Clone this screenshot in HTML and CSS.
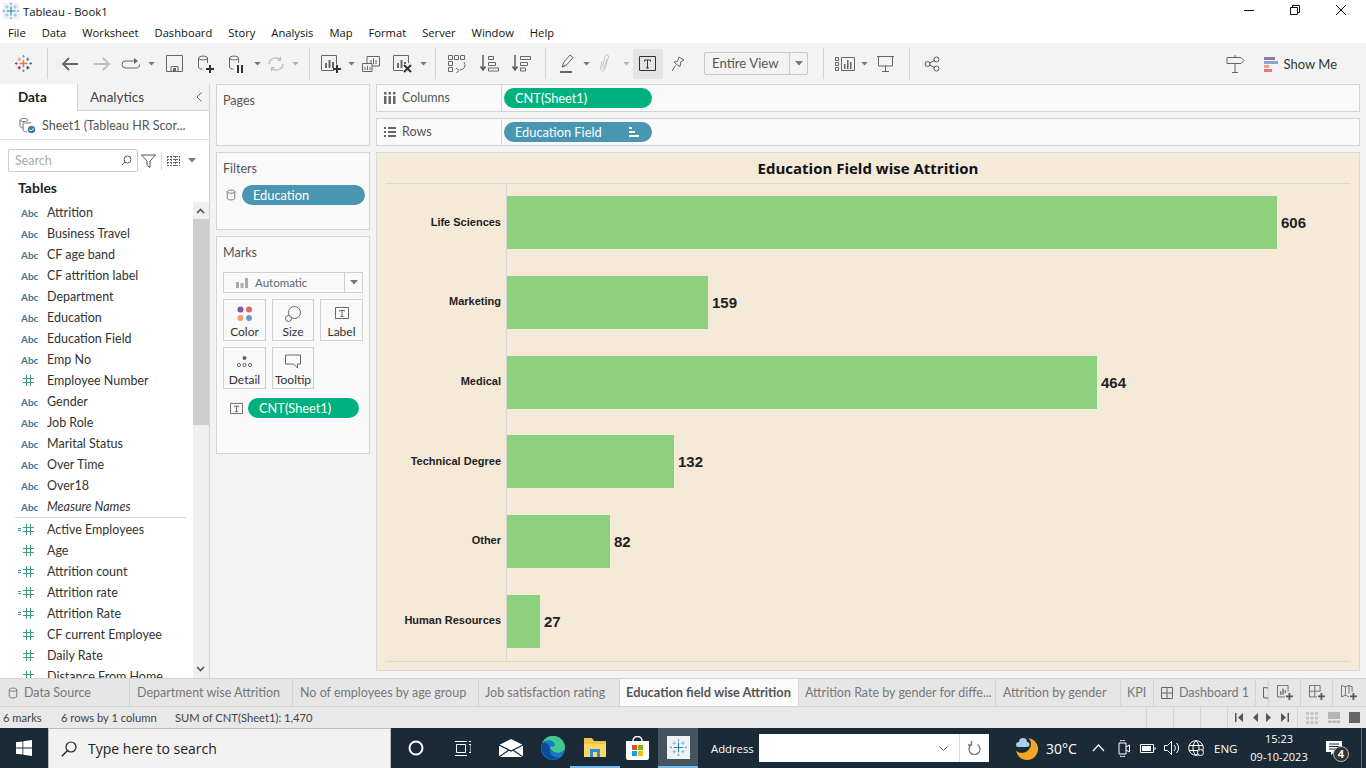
FILE: index.html
```html
<!DOCTYPE html>
<html lang="en">
<head>
  <meta charset="UTF-8">
  <title>Tableau - Book1</title>
  <link rel="stylesheet" href="styles.css">
</head>
<body>
<svg class="defs" width="0" height="0">
  <symbol id="hash" viewBox="0 0 11 11"><path d="M3.500 0v11M7.500 0v11M0 3.500h11M0 7.500h11" fill="none" stroke="#3f9a82"/></symbol>
  <symbol id="calchash" viewBox="0 0 16 11"><path d="M0 4.500h3M0 6.500h3M8.500 0v11M12.500 0v11M5 3.500h11M5 7.500h11" fill="none" stroke="#3f9a82"/></symbol>
  <symbol id="cyl" viewBox="0 0 12 14"><path d="M1.500 3v8c0 2.500 9 2.500 9 0V3c0-2.500-9-2.500-9 0zM1.500 3c0 2.500 9 2.500 9 0" fill="none" stroke="#666"/></symbol>
  <symbol id="tbox" viewBox="0 0 14 14"><path d="M.5 1.500h13v11H.5z" fill="none" stroke="#666"/><path d="M4.500 5.500v-1h5v1M7 4.500v6M5.500 10.500h3" fill="none" stroke="#666"/></symbol>
  <symbol id="caret" viewBox="0 0 8 5"><path d="M0 0h8L4 4.500z" fill="#777"/></symbol>
  <symbol id="plus" viewBox="0 0 8 8"><path d="M4 0v8M0 4h8" stroke="#333" stroke-width="2"/></symbol>
  <symbol id="logo" viewBox="0 0 20 20">
    <path d="M10 5.500v9M5.500 10h9" stroke="#e8762b" stroke-width="1.600"/>
    <path d="M5 3v4M3 5h4" stroke="#e8a02b" stroke-width="1.400"/>
    <path d="M15 3v4M13 5h4" stroke="#5b879b" stroke-width="1.400"/>
    <path d="M5 13v4M3 15h4" stroke="#c72035" stroke-width="1.400"/>
    <path d="M15 13v4M13 15h4" stroke="#1f447e" stroke-width="1.400"/>
    <path d="M10 0v3M8.500 1.500h3" stroke="#7099a6" stroke-width="1.100"/>
    <path d="M10 17v3M8.500 18.500h3" stroke="#59879b" stroke-width="1.100"/>
    <path d="M0 10h3M1.500 8.500v3" stroke="#7c2d6e" stroke-width="1.100"/>
    <path d="M17 10h3M18.500 8.500v3" stroke="#1f6e8c" stroke-width="1.100"/>
  </symbol>
  <symbol id="snow" viewBox="0 0 20 20">
    <path d="M10 5v10M5 10h10" stroke="#2f7fb5" stroke-width="1.200"/>
    <path d="M5.500 3.500v4M3.500 5.500h4M14.500 3.500v4M12.500 5.500h4M5.500 12.500v4M3.500 14.500h4M14.500 12.500v4M12.500 14.500h4" stroke="#8fb9d4"/>
    <path d="M10 1v2.500M8.800 2.200h2.400M10 16.500V19M8.800 17.800h2.400M1 10h2.500M2.200 8.800v2.400M16.500 10H19M17.800 8.800v2.400" stroke="#6da3c6" stroke-width=".8"/>
  </symbol>
</svg>

<div class="app">
  <div class="titlebar">
    <svg class="title-logo" width="18" height="18" viewBox="0 0 20 20"><rect x=".5" y=".5" width="19" height="19" fill="#eef3f6"/><use href="#snow" width="20" height="20"/></svg>
    <span class="title-text">Tableau - Book1</span>
    <div class="win-btns">
      <svg width="46" height="22" viewBox="0 0 46 22"><path d="M18 10.500h10" stroke="#111"/></svg>
      <svg width="46" height="22" viewBox="0 0 46 22"><path d="M18.500 7.500h7v7h-7zM20.500 7.500v-2h7v7h-2" fill="none" stroke="#111"/></svg>
      <svg width="46" height="22" viewBox="0 0 46 22"><path d="M18 5l10 10M28 5L18 15" stroke="#111"/></svg>
    </div>
  </div>

  <nav class="menubar">
    <a>File</a><a>Data</a><a>Worksheet</a><a>Dashboard</a><a>Story</a><a>Analysis</a><a>Map</a><a>Format</a><a>Server</a><a>Window</a><a>Help</a>
  </nav>

  <div class="toolbar">
    <div class="tool w46"><svg width="17" height="17"><use href="#logo"/></svg></div>
    <i class="sep first"></i>
    <div class="tool w32"><svg width="18" height="16" viewBox="0 0 18 16"><path d="M17 8H2M8 2L2 8l6 6" fill="none" stroke="#666" stroke-width="1.800"/></svg></div>
    <div class="tool w32"><svg width="18" height="16" viewBox="0 0 18 16"><path d="M1 8h15M10 2l6 6-6 6" fill="none" stroke="#bdbdbd" stroke-width="1.800"/></svg></div>
    <div class="tool w26"><svg width="20" height="12" viewBox="0 0 20 12"><path d="M13 3H4.500a3 3 0 0 0 0 7h11a3 3 0 0 0 3-3.500" fill="none" stroke="#666"/><path d="M13 0l4 3-4 3z" fill="#666"/></svg></div>
    <div class="tool w14"><svg width="7" height="4"><use href="#caret"/></svg></div>
    <div class="tool w32"><svg width="17" height="17" viewBox="0 0 17 17"><path d="M.5.500h16v16H.5zM5 16.500v-5h7v5" fill="none" stroke="#666"/><path d="M7 13h3v3H7z" fill="#666"/></svg></div>
    <div class="tool w31"><svg width="17" height="18" viewBox="0 0 17 18"><path d="M1.500 3v9c0 1.500 2 2 4 2.200M10.500 8V3c0-2.500-9-2.500-9 0 0 2.500 9 2.500 9 0" fill="none" stroke="#666"/><use href="#plus" x="9" y="10" width="8" height="8"/></svg></div>
    <div class="tool w30"><svg width="17" height="18" viewBox="0 0 17 18"><path d="M1.500 3v9c0 1.500 2 2 4 2.200M10.500 8V3c0-2.500-9-2.500-9 0 0 2.500 9 2.500 9 0" fill="none" stroke="#666"/><path d="M9 10h2v8H9zM13 10h2v8h-2z" fill="#333"/></svg></div>
    <div class="tool w12"><svg width="7" height="4"><use href="#caret"/></svg></div>
    <div class="tool w26"><svg width="18" height="16" viewBox="0 0 18 16"><path d="M2 8a7 6.500 0 0 1 12-4M16 8a7 6.500 0 0 1-12 4" fill="none" stroke="#c4c4c4" stroke-width="1.500"/><path d="M14 0v5H10zM4 16v-5h4z" fill="#c4c4c4"/></svg></div>
    <div class="tool w12"><svg width="7" height="4"><use href="#caret" opacity=".5"/></svg></div>
    <i class="sep s8"></i>
    <div class="tool w30"><svg width="21" height="18" viewBox="0 0 21 18"><path d="M13 15.500H.5V.5h15v9" fill="none" stroke="#666"/><path d="M4 8h2v5H4zM7.500 5h2v8h-2zM11 7h2v6h-2z" fill="#666"/><use href="#plus" x="12" y="10" width="8" height="8"/></svg></div>
    <div class="tool w10"><svg width="7" height="4"><use href="#caret"/></svg></div>
    <div class="tool w30"><svg width="18" height="16" viewBox="0 0 18 16"><path d="M5 8V.5h12.500V10H10" fill="none" stroke="#666"/><path d="M.5 7.500H10v8H.5z" fill="none" stroke="#666"/><path d="M9 4v4M11.500 2.500V8M14 4v4M3 11v3M5.500 10v4M8 11v3" stroke="#666"/></svg></div>
    <div class="tool w32"><svg width="19" height="18" viewBox="0 0 19 18"><path d="M10 15.500H.5V.5h15V8" fill="none" stroke="#666"/><path d="M4 8h2v5H4zM7.500 5h2v8h-2zM11 7h2v2h-2z" fill="#666"/><path d="M11 10l7 7M18 10l-7 7" stroke="#333" stroke-width="2"/></svg></div>
    <div class="tool w10"><svg width="7" height="4"><use href="#caret"/></svg></div>
    <i class="sep s7"></i>
    <div class="tool w30"><svg width="19" height="19" viewBox="0 0 19 19"><path d="M.5 1.500h4v4h-4zM6.500 1.500h4v4h-4zM12.500 1.500h4v4h-4zM.5 7.500h4v4h-4zM.5 13.500h4v4h-4z" fill="none" stroke="#666"/><path d="M16 8a5 5 0 0 1-4 8M8 14l3 2.500L8.500 19" fill="none" stroke="#666"/></svg></div>
    <div class="tool w34"><svg width="19" height="17" viewBox="0 0 19 17"><path d="M3 0v15M.5 11.500L3 15l2.500-3.500" fill="none" stroke="#555" stroke-width="1.400"/><path d="M8.500 1.500h5v3h-5zM8.500 7.500h7v3h-7zM8.500 13h10v3h-10z" fill="none" stroke="#666"/></svg></div>
    <div class="tool w31"><svg width="19" height="17" viewBox="0 0 19 17"><path d="M3 0v15M.5 11.500L3 15l2.500-3.500" fill="none" stroke="#555" stroke-width="1.400"/><path d="M8.500 1.500h10v3h-10zM8.500 7.500h7v3h-7zM8.500 13h5v3h-5z" fill="none" stroke="#666"/></svg></div>
    <i class="sep s8"></i>
    <div class="tool w30"><svg width="14" height="19" viewBox="0 0 14 19"><path d="M2 13l2-5 6-7 3 2.500-6 7zM2 13l3-1" fill="none" stroke="#666"/><path d="M0 17h12v2H0z" fill="#666"/></svg></div>
    <div class="tool w8"><svg width="7" height="4"><use href="#caret"/></svg></div>
    <div class="tool w30"><svg width="12" height="19" viewBox="0 0 12 19"><path d="M3 7l-1.500 7c-.5 3 3.500 4 4.300 1L9.500 3C10 .5 7 0 6 2.500L3.500 13c-.3 1.500 1.700 2 2 .5L8 5" fill="none" stroke="#c6c6c6"/></svg></div>
    <div class="tool w12"><svg width="7" height="4"><use href="#caret" opacity=".5"/></svg></div>
    <div class="tool w30 active"><svg width="18" height="16" viewBox="0 0 18 16"><path d="M.5.500h16v14H.5z" fill="none" stroke="#333"/><path d="M5.500 5.500V4h6v1.500M8.500 4v8M7 12h3" fill="none" stroke="#333"/></svg></div>
    <div class="tool w30"><svg width="14" height="16" viewBox="0 0 14 16"><path d="M8 1l5 3-3 1.500-1 5L5 8 3 6l3.500-.5zM4.500 9.500L1 15" fill="none" stroke="#666"/></svg></div>
    <div class="fit-select"><span>Entire View</span><b><svg width="8" height="5"><use href="#caret"/></svg></b></div>
    <i class="sep s15"></i>
    <div class="tool w30"><svg width="20" height="14" viewBox="0 0 20 14"><path d="M.5.500h3v3h-3zM.5 5.500h3v3h-3zM.5 10.500h3v3h-3zM6.500.5h13v13h-13z" fill="none" stroke="#666"/><path d="M9 7h1.500v5H9zM12 3h1.500v9H12zM15 5h1.500v7H15z" fill="#666"/></svg></div>
    <div class="tool w8"><svg width="7" height="4"><use href="#caret"/></svg></div>
    <div class="tool w34"><svg width="17" height="16" viewBox="0 0 17 16"><path d="M0 .5h17M1.500 1v9h14V1M8.500 10v5M5 15.500h7" fill="none" stroke="#666"/></svg></div>
    <i class="sep s7"></i>
    <div class="tool w32"><svg width="16" height="16" viewBox="0 0 16 16"><circle cx="3.500" cy="8" r="2.500" fill="none" stroke="#555"/><circle cx="12.500" cy="3.500" r="2.500" fill="none" stroke="#555"/><circle cx="12.500" cy="12.500" r="2.500" fill="none" stroke="#555"/><path d="M5.800 7l4.500-2.500M5.800 9l4.500 2.500" stroke="#555"/></svg></div>
    <div class="tool-right">
      <svg class="signpost" width="19" height="18" viewBox="0 0 19 18"><path d="M9 0v2M1 2.500h14l3 3-3 3H1zM9 9v8M6 17.500h6" fill="none" stroke="#666"/></svg>
      <svg width="15" height="16" viewBox="0 0 15 16"><path d="M1 1h11v3H1z" fill="#8e7aa3"/><path d="M1 5h14v3H1z" fill="#86a7cf"/><path d="M1 9h5v3H1z" fill="#f3a57a"/><path d="M1 13h8v3H1z" fill="#f5727f"/></svg>
      <span>Show Me</span>
    </div>
  </div>

  <div class="workspace">
    <aside class="data-pane">
      <div class="pane-tabs">
        <div class="pane-tab current">Data</div>
        <div class="pane-tab">Analytics</div>
        <svg class="collapse" width="6" height="10" viewBox="0 0 6 10"><path d="M5.500.5L1 5l4.500 4.500" fill="none" stroke="#666"/></svg>
      </div>
      <div class="source-row">
        <svg width="17" height="17" viewBox="0 0 17 17"><path d="M1 3v6c0 1.500 2 2 4 2M9 3c0 2-8 2-8 0s8-2 8 0zM4 6v7c0 1.200 2 2 4 2M12 5c0 1.500-8 1.500-8 0" fill="none" stroke="#777"/><circle cx="12.500" cy="12.500" r="3.800" fill="#3f88a8"/><path d="M10.500 12.500l1.500 1.500 2.500-2.500" fill="none" stroke="#fff"/></svg>
        <span>Sheet1 (Tableau HR Scor...</span>
      </div>
      <div class="search-row">
        <div class="search-box"><span>Search</span><svg width="11" height="11" viewBox="0 0 11 11"><circle cx="6.500" cy="4.500" r="3.500" fill="none" stroke="#555"/><path d="M4 7L1 10" stroke="#555"/></svg></div>
        <svg width="15" height="14" viewBox="0 0 15 14"><path d="M.5 1h14L9 7v6.500l-3-2V7z" fill="none" stroke="#555"/></svg>
        <i class="mini-sep"></i>
        <svg width="13" height="10" viewBox="0 0 13 10"><path d="M0 .5h13M0 3.500h13M0 6.500h13M0 9.500h13M.5 0v10M4.500 0v10M8.500 0v10M12.500 0v10" fill="none" stroke="#666" stroke-dasharray="2 1"/></svg>
        <svg class="view-caret" width="8" height="5"><use href="#caret"/></svg>
      </div>
      <div class="tables-title">Tables</div>
      <div class="fields-wrap">
        <ul class="fields">
          <li><b class="abc">Abc</b>Attrition</li>
          <li><b class="abc">Abc</b>Business Travel</li>
          <li><b class="abc">Abc</b>CF age band</li>
          <li><b class="abc">Abc</b>CF attrition label</li>
          <li><b class="abc">Abc</b>Department</li>
          <li><b class="abc">Abc</b>Education</li>
          <li><b class="abc">Abc</b>Education Field</li>
          <li><b class="abc">Abc</b>Emp No</li>
          <li><span class="num"><svg width="11" height="11"><use href="#hash"/></svg></span>Employee Number</li>
          <li><b class="abc">Abc</b>Gender</li>
          <li><b class="abc">Abc</b>Job Role</li>
          <li><b class="abc">Abc</b>Marital Status</li>
          <li><b class="abc">Abc</b>Over Time</li>
          <li><b class="abc">Abc</b>Over18</li>
          <li class="measure-names"><b class="abc">Abc</b><em>Measure Names</em></li>
          <li><span class="num"><svg width="16" height="11"><use href="#calchash"/></svg></span>Active Employees</li>
          <li><span class="num"><svg width="11" height="11"><use href="#hash"/></svg></span>Age</li>
          <li><span class="num"><svg width="16" height="11"><use href="#calchash"/></svg></span>Attrition count</li>
          <li><span class="num"><svg width="16" height="11"><use href="#calchash"/></svg></span>Attrition rate</li>
          <li><span class="num"><svg width="16" height="11"><use href="#calchash"/></svg></span>Attrition Rate</li>
          <li><span class="num"><svg width="11" height="11"><use href="#hash"/></svg></span>CF current Employee</li>
          <li><span class="num"><svg width="11" height="11"><use href="#hash"/></svg></span>Daily Rate</li>
          <li><span class="num"><svg width="11" height="11"><use href="#hash"/></svg></span>Distance From Home</li>
        </ul>
        <div class="scrollbar">
          <svg class="arrow" width="15" height="17" viewBox="0 0 15 17"><path d="M4 11l3.500-3.500L11 11" fill="none" stroke="#555" stroke-width="1.600"/></svg>
          <div class="thumb"></div>
          <div class="track"></div>
          <svg class="arrow" width="15" height="17" viewBox="0 0 15 17"><path d="M4 6l3.500 3.500L11 6" fill="none" stroke="#555" stroke-width="1.600"/></svg>
        </div>
      </div>
    </aside>

    <div class="cards">
      <section class="card pages"><h3>Pages</h3></section>
      <section class="card filters">
        <h3>Filters</h3>
        <div class="filter-row">
          <svg width="10" height="12"><use href="#cyl"/></svg>
          <div class="pill blue wide">Education</div>
        </div>
      </section>
      <section class="card marks">
        <h3>Marks</h3>
        <div class="mark-type">
          <span class="mark-type-label"><svg width="12" height="10" viewBox="0 0 12 10"><path d="M0 4h3v6H0zM4.500 5h3v5h-3zM9 0h3v10H9z" fill="#aaa"/></svg>Automatic</span>
          <b><svg width="8" height="5"><use href="#caret"/></svg></b>
        </div>
        <div class="mark-grid">
          <div class="mark-btn"><svg width="16" height="16" viewBox="0 0 16 16"><circle cx="3.500" cy="3.500" r="3" fill="#7d5a91"/><circle cx="12" cy="3.500" r="3" fill="#ef5d6f"/><circle cx="3.500" cy="12" r="3" fill="#f2a070"/><circle cx="12" cy="12" r="3" fill="#6d9ccc"/></svg>Color</div>
          <div class="mark-btn"><svg width="16" height="16" viewBox="0 0 16 16"><circle cx="9.500" cy="6.500" r="6" fill="none" stroke="#666"/><circle cx="3.500" cy="12.500" r="3" fill="#fafafa" stroke="#666"/></svg>Size</div>
          <div class="mark-btn"><svg width="14" height="14"><use href="#tbox"/></svg>Label</div>
          <div class="mark-btn"><svg width="15" height="15" viewBox="0 0 15 15"><circle cx="7.500" cy="4" r="2" fill="#666"/><circle cx="2" cy="11" r="1.600" fill="none" stroke="#666"/><circle cx="7.500" cy="11" r="1.600" fill="none" stroke="#666"/><circle cx="13" cy="11" r="1.600" fill="none" stroke="#666"/></svg>Detail</div>
          <div class="mark-btn"><svg width="16" height="15" viewBox="0 0 16 15"><path d="M.5 1h15v9h-3v4l-4-4h-8z" fill="none" stroke="#666"/></svg>Tooltip</div>
        </div>
        <div class="mark-pill-row">
          <svg width="13" height="13"><use href="#tbox"/></svg>
          <div class="pill green wide">CNT(Sheet1)</div>
        </div>
      </section>
    </div>

    <div class="view">
      <div class="shelf">
        <div class="shelf-name"><svg width="12" height="12" viewBox="0 0 12 12"><path d="M0 0h2.500v2.500H0zM4.500 0H7v2.500H4.500zM9 0h2.500v2.500H9zM0 4h2.500v8H0zM4.500 4H7v8H4.500zM9 4h2.500v8H9z" fill="#666"/></svg>Columns</div>
        <div class="shelf-pills"><div class="pill green">CNT(Sheet1)</div></div>
      </div>
      <div class="shelf">
        <div class="shelf-name"><svg width="12" height="10" viewBox="0 0 12 10"><path d="M0 0h2v2H0zM4 0h8v2H4zM0 4h2v2H0zM4 4h8v2H4zM0 8h2v2H0zM4 8h8v2H4z" fill="#666"/></svg>Rows</div>
        <div class="shelf-pills"><div class="pill blue">Education Field<svg class="sort-mark" width="10" height="10" viewBox="0 0 10 10"><path d="M0 0h3v2H0zM0 4h6v2H0zM0 8h10v2H0z" fill="#fff"/></svg></div></div>
      </div>
      <div class="chart">
        <h2 class="chart-title">Education Field wise Attrition</h2>
        <div class="plot">
          <div class="bar-row"><div class="bar-label">Life Sciences</div><div class="bar-cell"><div class="bar" style="width:770px"></div><span class="bar-value">606</span></div></div>
          <div class="bar-row"><div class="bar-label">Marketing</div><div class="bar-cell"><div class="bar" style="width:201px"></div><span class="bar-value">159</span></div></div>
          <div class="bar-row"><div class="bar-label">Medical</div><div class="bar-cell"><div class="bar" style="width:590px"></div><span class="bar-value">464</span></div></div>
          <div class="bar-row"><div class="bar-label">Technical Degree</div><div class="bar-cell"><div class="bar" style="width:167px"></div><span class="bar-value">132</span></div></div>
          <div class="bar-row"><div class="bar-label">Other</div><div class="bar-cell"><div class="bar" style="width:103px"></div><span class="bar-value">82</span></div></div>
          <div class="bar-row"><div class="bar-label">Human Resources</div><div class="bar-cell"><div class="bar" style="width:33px"></div><span class="bar-value">27</span></div></div>
        </div>
      </div>
    </div>
  </div>

  <div class="sheet-tabs">
    <div class="sheet-tab t130"><svg width="10" height="12"><use href="#cyl"/></svg>Data Source</div>
    <div class="sheet-tab t163">Department wise Attrition</div>
    <div class="sheet-tab t186">No of employees by age group</div>
    <div class="sheet-tab t141">Job satisfaction rating</div>
    <div class="sheet-tab t179 current">Education field wise Attrition</div>
    <div class="sheet-tab t197">Attrition Rate by gender for diffe...</div>
    <div class="sheet-tab t125">Attrition by gender</div>
    <div class="sheet-tab t33">KPI</div>
    <div class="sheet-tab t102"><svg width="12" height="12" viewBox="0 0 12 12"><path d="M.5.500h11v11H.5zM6 .5v11M.5 6h11" fill="none" stroke="#666"/></svg>Dashboard 1</div>
    <div class="sheet-tab t13"><svg width="6" height="12" viewBox="0 0 6 12"><path d="M6 1L.5.500v10L6 11.500" fill="none" stroke="#666"/></svg></div>
    <div class="new-tab"><svg width="16" height="15" viewBox="0 0 18 17"><path d="M9 13.500H.5V.5h12v7" fill="none" stroke="#666"/><path d="M3.500 7h1.500v4H3.500zM6 4h1.500v7H6zM8.500 6H10v3H8.500z" fill="#666"/><use href="#plus" x="10" y="9" width="8" height="8" opacity=".8"/></svg></div>
    <div class="new-tab"><svg width="16" height="15" viewBox="0 0 18 17"><path d="M9 13.500H.5V.5h12v7M6.500 .5v13M.5 7h12" fill="none" stroke="#666"/><use href="#plus" x="10" y="9" width="8" height="8" opacity=".8"/></svg></div>
    <div class="new-tab"><svg width="16" height="15" viewBox="0 0 18 17"><path d="M9 13.500l-4-2-4.500 2V.5L5 2l4-1.500L12.500 2v6M5 2v9.500M9 .5V10" fill="none" stroke="#666"/><use href="#plus" x="10" y="9" width="8" height="8" opacity=".8"/></svg></div>
  </div>

  <div class="statusbar">
    <span class="st-marks">6 marks</span>
    <span class="st-rows">6 rows by 1 column</span>
    <span class="st-sum">SUM of CNT(Sheet1): 1,470</span>
    <div class="st-right">
      <i class="st-cell"></i><i class="st-cell"></i><i class="st-cell"></i>
      <div class="st-nav">
        <svg width="8" height="9" viewBox="0 0 8 9"><path d="M0 0h1.500v9H0zM8 0v9L3 4.500z" fill="#555"/></svg>
        <svg width="6" height="9" viewBox="0 0 6 9"><path d="M6 0v9L1 4.500z" fill="#555"/></svg>
        <svg width="6" height="9" viewBox="0 0 6 9"><path d="M0 0v9l5-4.500z" fill="#555"/></svg>
        <svg width="8" height="9" viewBox="0 0 8 9"><path d="M0 0v9l5-4.500zM6.500 0H8v9H6.500z" fill="#555"/></svg>
      </div>
      <div class="st-views">
        <svg width="12" height="12" viewBox="0 0 12 12"><path d="M0 0h3v3H0zM4.500 0h3v3h-3zM9 0h3v3H9zM0 4.500h3v3H0zM4.500 4.500h3v3h-3zM9 4.500h3v3H9zM0 9h3v3H0zM4.500 9h3v3h-3zM9 9h3v3H9z" fill="#c4c4c4"/></svg>
        <svg width="12" height="11" viewBox="0 0 12 11"><path d="M0 0h12v7H0zM0 8.500h3.500V11H0zM4.300 8.500h3.500V11H4.300zM8.500 8.500H12V11H8.500z" fill="#b5b5b5"/></svg>
        <svg width="11" height="11"><rect width="11" height="11" fill="#666"/></svg>
      </div>
    </div>
  </div>

  <footer class="taskbar">
    <div class="start"><svg width="16" height="16" viewBox="0 0 16 16"><path d="M0 2.300l6.500-.9v6.200H0zM7.300 1.300L16 0v7.600H7.300zM0 8.400h6.500v6.200L0 13.700zM7.300 8.400H16V16l-8.700-1.200z" fill="#fff"/></svg></div>
    <div class="task-search"><svg width="16" height="16" viewBox="0 0 16 16"><circle cx="10" cy="6" r="5" fill="none" stroke="#222" stroke-width="1.200"/><path d="M6.300 9.700L.8 15.200" stroke="#222" stroke-width="1.400"/></svg><span>Type here to search</span></div>
    <div class="task-icon w50"><svg width="16" height="16" viewBox="0 0 16 16"><circle cx="8" cy="8" r="6.500" fill="none" stroke="#fff" stroke-width="2"/></svg></div>
    <div class="task-icon w44"><svg width="16" height="15" viewBox="0 0 16 15"><path d="M0 .5h12M0 14.500h12M1.500 3.500h9v8h-9zM14 .5h2M14 3.500h2v8h-2" fill="none" stroke="#fff"/></svg></div>
    <div class="task-icon w50 mail"><svg width="24" height="18" viewBox="0 0 24 18"><path d="M0 6l12-6 12 6v12H0z" fill="#fff"/><path d="M0 6l12 6 12-6M0 18l10-7M24 18l-10-7" fill="none" stroke="#1a2b37" stroke-width="1.200"/></svg></div>
    <div class="task-icon w34"><svg width="24" height="24" viewBox="0 0 24 24"><circle cx="12" cy="12" r="12" fill="#1b76c4"/><path d="M24 12a12 12 0 0 0-23-5c4-4 12-4 13 2-1 2-4 2-5 1 0 5 7 8 11 6 2-1 4-2 4-4z" fill="#3ec98f"/><path d="M1 7c-2 6 1 13 8 16 3 1 7 0 9-2-6 1-10-3-9-8 0-5-5-7-8-6z" fill="#0c4c96"/></svg></div>
    <div class="task-icon w50 running"><svg width="22" height="19" viewBox="0 0 22 19"><path d="M0 0h8l2 3h12v16H0z" fill="#f5c444"/><path d="M0 6h22v13H0z" fill="#fbd868"/><path d="M6 11h10v8h-3v-5H9v5H6z" fill="#2a8fd4"/></svg></div>
    <div class="task-icon w34"><svg width="23" height="24" viewBox="0 0 23 24"><path d="M0 5h23v17a2 2 0 0 1-2 2H2a2 2 0 0 1-2-2z" fill="#fff"/><path d="M7 5c0-6 9-6 9 0" fill="none" stroke="#fff" stroke-width="1.500"/><path d="M6 9h5v5H6z" fill="#f25022"/><path d="M12 9h5v5h-5z" fill="#7fba00"/><path d="M6 15h5v5H6z" fill="#00a4ef"/><path d="M12 15h5v5h-5z" fill="#ffb900"/></svg></div>
    <div class="task-icon tableau-app"><svg width="23" height="23" viewBox="0 0 23 23"><rect width="23" height="23" fill="#eef3f6"/><svg x="2" y="2" width="19" height="19" viewBox="0 0 20 20"><use href="#snow" width="20" height="20"/></svg></svg></div>
    <span class="addr-label">Address</span>
    <div class="addr-box"><svg width="9" height="5" viewBox="0 0 9 5"><path d="M.5.500l4 4 4-4" fill="none" stroke="#555"/></svg><b><svg width="13" height="14" viewBox="0 0 13 14"><path d="M9.500 3.500a5.500 5.500 0 1 1-6 0M3.500 0v4H0" fill="none" stroke="#777" stroke-width="1.300"/></svg></b></div>
    <div class="weather"><svg width="24" height="24" viewBox="0 0 24 24"><circle cx="13" cy="13" r="11" fill="#f6a623"/><circle cx="8" cy="8" r="9" fill="#1a2b37"/><path d="M2 9a3 3 0 0 1 3-3 4 4 0 0 1 8 0 2.500 2.500 0 0 1 0 5H4a2 2 0 0 1-2-2z" fill="#a9cdea"/></svg><span>30°C</span></div>
    <div class="tray">
      <svg class="tray-chevron" width="13" height="8" viewBox="0 0 13 8"><path d="M1 7l5.500-6L12 7" fill="none" stroke="#fff" stroke-width="1.200"/></svg>
      <svg class="tray-meet" width="12" height="17" viewBox="0 0 12 17"><path d="M1 3h7v11H1zM8 7l3.500-2v7L8 10M2 1c1-1 4-1 5 0M2 16c1 1 4 1 5 0" fill="none" stroke="#fff"/></svg>
      <svg width="16" height="9" viewBox="0 0 16 9"><path d="M.5.500h13v8H.5zM15 3v3" fill="none" stroke="#fff"/><path d="M2 2h9v5H2z" fill="#fff"/></svg>
      <svg width="16" height="14" viewBox="0 0 16 14"><path d="M.5 4.500h3l4-4v13l-4-4h-3zM10 4a4 4 0 0 1 0 6M12.500 2a7 7 0 0 1 0 10" fill="none" stroke="#fff"/></svg>
      <svg width="16" height="16" viewBox="0 0 16 16"><circle cx="8" cy="8" r="7.300" fill="none" stroke="#fff"/><path d="M8 .5c-4 4-4 11 0 15M8 .5c4 4 4 11 0 15M1 5.500h14M1 10.500h14" fill="none" stroke="#fff"/><circle cx="12.500" cy="12.500" r="3" fill="#1a2b37" stroke="#fff"/></svg>
    </div>
    <span class="lang">ENG</span>
    <div class="clock"><span>15:23</span><span>09-10-2023</span></div>
    <div class="notify"><svg width="16" height="14" viewBox="0 0 16 14"><path d="M0 0h16v11H8l-3 3v-3H0z" fill="#fff"/><path d="M3 3h10M3 5.500h10M3 8h7" stroke="#1a2b37"/></svg><span class="notify-count">4</span></div>
    <i class="show-desktop"></i>
  </footer>
</div>
</body>
</html>
```

FILE: styles.css
```css
* {
  box-sizing: border-box;
}

html, body {
  margin: 0;
  padding: 0;
  overflow: hidden;
}

body {
  font-family: "Lato", "Open Sans", sans-serif;
  font-size: 12.500px;
  color: #333;
  background: #f3f3f3;
}

.defs {
  position: absolute;
}

svg {
  display: block;
  flex: none;
}

.app {
  width: 1366px;
  height: 768px;
  display: flex;
  flex-direction: column;
}

/* window chrome */
.titlebar {
  height: 22px;
  background: #fff;
  display: flex;
  align-items: center;
  padding-left: 2px;
}

.title-text {
  margin-left: 3px;
  font-family: "Open Sans", sans-serif;
  font-size: 11.300px;
  color: #111;
}

.win-btns {
  margin-left: auto;
  margin-right: 2px;
  display: flex;
}

.menubar {
  height: 21px;
  background: #fff;
  display: flex;
  align-items: center;
  padding-left: 8px;
  gap: 16px;
  font-family: "Open Sans", sans-serif;
  font-size: 11.200px;
  color: #111;
}

/* toolbar */
.toolbar {
  height: 41px;
  background: #f3f3f3;
  display: flex;
  align-items: center;
}

.tool {
  height: 30px;
  display: flex;
  align-items: center;
  justify-content: center;
}

.tool.active {
  background: #e4e4e4;
  margin-left: 1px;
}

.w8 { width: 8px; }
.w10 { width: 10px; }
.w12 { width: 12px; }
.w14 { width: 14px; }
.w26 { width: 26px; }
.w30 { width: 30px; }
.w31 { width: 31px; }
.w32 { width: 32px; }
.w34 { width: 34px; }
.w44 { width: 44px; }
.w46 { width: 46px; }
.w50 { width: 50px; }

.sep {
  width: 1px;
  height: 31px;
  background: #d4d4d4;
  margin-right: 6px;
}

.sep.first { margin-left: 1px; }
.sep.s7 { margin-left: 7px; }
.sep.s8 { margin-left: 8px; }
.sep.s15 { margin-left: 15px; }

.fit-select {
  width: 104px;
  height: 23px;
  margin-left: 11px;
  border: 1px solid #c8c8c8;
  border-radius: 2px;
  display: flex;
  align-items: center;
  font-size: 13.200px;
  color: #555;
}

.fit-select span {
  flex: 1;
  padding-left: 7px;
  padding-bottom: 2px;
}

.fit-select b {
  width: 18px;
  height: 100%;
  border-left: 1px solid #c8c8c8;
  display: flex;
  align-items: center;
  justify-content: center;
}

.tool-right {
  margin-left: auto;
  margin-right: 29px;
  display: flex;
  align-items: center;
  font-size: 13px;
  color: #333;
}

.signpost {
  margin-right: 18px;
}

.tool-right span {
  margin-left: 6px;
}

/* main area */
.workspace {
  height: 594px;
  display: flex;
  overflow: hidden;
}

.data-pane {
  width: 210px;
  background: #fff;
  border-right: 1px solid #d4d4d4;
  display: flex;
  flex-direction: column;
  flex: none;
}

.pane-tabs {
  height: 27px;
  display: flex;
  align-items: stretch;
  background: #f3f3f3;
  position: relative;
  flex: none;
}

.pane-tab {
  display: flex;
  align-items: center;
  font-size: 13.500px;
  color: #444;
  padding-left: 12px;
  padding-bottom: 1px;
  flex: 1;
  border-bottom: 1px solid #d4d4d4;
}

.pane-tab.current {
  flex: none;
  width: 78px;
  padding-left: 18px;
  font-weight: 700;
  color: #222;
  border-bottom: 0;
  border-right: 1px solid #d4d4d4;
  background: #fff;
}

.collapse {
  position: absolute;
  right: 7px;
  top: 8px;
}

.source-row {
  height: 29px;
  display: flex;
  align-items: center;
  gap: 6px;
  padding-left: 19px;
  border-bottom: 1px solid #e4e4e4;
  color: #555;
  flex: none;
}

.search-row {
  display: flex;
  align-items: center;
  margin-top: 9px;
  padding-left: 8px;
  flex: none;
}

.search-box {
  width: 130px;
  height: 23px;
  border: 1px solid #ccc;
  border-radius: 2px;
  display: flex;
  align-items: center;
  justify-content: space-between;
  padding: 0 5px 0 6px;
  margin-right: 3px;
  color: #aaa;
}

.mini-sep {
  width: 1px;
  height: 18px;
  background: #d8d8d8;
  margin: 0 5px;
}

.view-caret {
  margin-left: 8px;
}

.tables-title {
  margin: 7px 0 0 18px;
  height: 20px;
  font-size: 14px;
  font-weight: 700;
  color: #222;
  flex: none;
}

.fields-wrap {
  flex: 1;
  min-height: 0;
  margin-top: 3px;
  display: flex;
  overflow: hidden;
}

.fields {
  flex: 1;
  margin: 0;
  padding: 0;
  list-style: none;
}

.fields li {
  height: 21px;
  padding-bottom: 1px;
  display: flex;
  align-items: center;
  color: #333;
}

.fields li.measure-names {
  height: 22px;
  margin-bottom: 1px;
  margin-left: 15px;
  margin-right: 7px;
  border-bottom: 1px solid #d8d8d8;
}

.measure-names .abc {
  margin-left: -15px;
}

.abc {
  width: 47px;
  padding-left: 21px;
  padding-top: 1px;
  font-size: 10px;
  font-weight: 700;
  color: #3f7593;
  flex: none;
}

.num {
  width: 47px;
  padding-right: 13px;
  padding-top: 1px;
  display: flex;
  justify-content: flex-end;
  flex: none;
}

.scrollbar {
  width: 16px;
  margin-right: 0;
  background: #f0f0f0;
  display: flex;
  flex-direction: column;
  flex: none;
}

.arrow {
  flex: none;
}

.thumb {
  height: 206px;
  background: #cdcdcd;
  flex: none;
}

.track {
  flex: 1;
}

/* middle cards */
.cards {
  width: 154px;
  margin-left: 6px;
  display: flex;
  flex-direction: column;
  gap: 6px;
  flex: none;
}

.card {
  background: #f9f9f9;
  border: 1px solid #d4d4d4;
  padding: 8px 6px 0;
}

.card h3 {
  margin: 0;
  font-size: 12.500px;
  font-weight: 400;
  color: #555;
}

.pages {
  height: 62px;
}

.filters {
  height: 78px;
}

.marks {
  height: 218px;
}

.filter-row {
  display: flex;
  align-items: center;
  gap: 6px;
  margin-top: 9px;
  padding-left: 3px;
  padding-right: 0;
  margin-right: -2px;
}

.pill {
  width: 148px;
  height: 20px;
  border-radius: 10px;
  color: #fff;
  font-size: 12.800px;
  display: flex;
  align-items: center;
  padding-left: 11px;
  padding-right: 12px;
  justify-content: space-between;
}

.pill.wide {
  width: auto;
  flex: 1;
}

.pill.green {
  background: #00b180;
}

.pill.blue {
  background: #4996b2;
}

.mark-type {
  margin-top: 12px;
  height: 21px;
  border: 1px solid #d0d0d0;
  display: flex;
  align-items: center;
  font-size: 11.500px;
  color: #666;
}

.mark-type-label {
  flex: 1;
  display: flex;
  align-items: center;
  gap: 7px;
  padding-left: 12px;
}

.mark-type b {
  width: 18px;
  height: 100%;
  border-left: 1px solid #d0d0d0;
  display: flex;
  align-items: center;
  justify-content: center;
}

.mark-grid {
  margin-top: 6px;
  display: grid;
  grid-template-columns: 43px 42px 43px;
  grid-auto-rows: 42px;
  column-gap: 6px;
  row-gap: 6px;
}

.mark-btn {
  border: 1px solid #d0d0d0;
  display: flex;
  flex-direction: column;
  align-items: center;
  justify-content: space-between;
  padding: 6px 0 1px;
  font-size: 12px;
  line-height: 15px;
  color: #333;
}

.mark-pill-row {
  margin-top: 9px;
  padding-left: 7px;
  padding-right: 4px;
  display: flex;
  align-items: center;
  gap: 5px;
}

/* shelves and chart */
.view {
  width: 984px;
  margin-left: 6px;
  display: flex;
  flex-direction: column;
  flex: none;
}

.shelf {
  height: 28px;
  margin-bottom: 6px;
  background: #f9f9f9;
  border: 1px solid #d4d4d4;
  display: flex;
  align-items: center;
}

.shelf-name {
  width: 125px;
  height: 100%;
  padding-left: 7px;
  padding-bottom: 1px;
  border-right: 1px solid #d4d4d4;
  display: flex;
  align-items: center;
  gap: 6px;
  color: #555;
}

.shelf-pills {
  padding-left: 2px;
}

.sort-mark {
  margin-right: 1px;
}

.chart {
  height: 519px;
  background: #f5e9d8;
  border: 1px solid #d8d8d8;
  padding: 0 9px;
}

.chart-title {
  margin: 0;
  height: 30px;
  display: flex;
  align-items: center;
  justify-content: center;
  font-family: "Open Sans", sans-serif;
  font-size: 15px;
  font-weight: 700;
  color: #111;
}

.plot {
  height: 479px;
  padding-bottom: 1px;
  box-shadow: inset 0 1px 0 #d8d8d8, inset 0 -1px 0 #d8d8d8;
  display: grid;
  grid-template-rows: repeat(6, 1fr);
}

.bar-row {
  display: flex;
  align-items: stretch;
}

.bar-label {
  width: 120px;
  padding-right: 5px;
  padding-bottom: 2px;
  display: flex;
  align-items: center;
  justify-content: flex-end;
  font-family: "Liberation Sans", sans-serif;
  font-size: 11px;
  font-weight: 700;
  color: #222;
}

.bar-cell {
  flex: 1;
  border-left: 1px solid #d8d8d8;
  display: flex;
  align-items: center;
}

.bar {
  height: 53px;
  background: #8dd17e;
}

.bar-value {
  margin-left: 4px;
  font-family: "Liberation Sans", sans-serif;
  font-size: 15px;
  font-weight: 700;
  color: #222;
}

/* sheet tabs */
.sheet-tabs {
  height: 29px;
  background: #e6e6e6;
  border-top: 1px solid #d4d4d4;
  border-bottom: 1px solid #d4d4d4;
  display: flex;
  color: #777;
}

.sheet-tab {
  border-right: 1px solid #d4d4d4;
  display: flex;
  align-items: center;
  gap: 6px;
  padding-left: 7px;
  white-space: nowrap;
  overflow: hidden;
  flex: none;
}

.sheet-tab.current {
  background: #fafafa;
  font-size: 12.800px;
  font-weight: 700;
  color: #555;
  padding-left: 6px;
  padding-bottom: 2px;
}

.t130 { width: 130px; padding-left: 8px; }
.t163 { width: 163px; }
.t186 { width: 186px; }
.t141 { width: 141px; padding-left: 6px; }
.t179 { width: 179px; }
.t197 { width: 197px; padding-left: 6px; }
.t125 { width: 125px; }
.t33 { width: 33px; padding-left: 6px; }
.t102 { width: 102px; }
.t13 { width: 13px; }

.new-tab {
  width: 32px;
  border-right: 1px solid #d4d4d4;
  display: flex;
  align-items: center;
  justify-content: center;
  flex: none;
}

.new-tab:last-child {
  border-right: 0;
}

/* status bar */
.statusbar {
  height: 21px;
  background: #e8e8e8;
  display: flex;
  align-items: center;
  font-size: 11.200px;
  color: #444;
}

.st-marks { width: 61px; padding-left: 3px; }
.st-rows { width: 114px; }

.st-right {
  margin-left: auto;
  height: 100%;
  display: flex;
}

.st-cell {
  width: 27px;
  border-left: 1px solid #d4d4d4;
}

.st-nav {
  width: 71px;
  border-left: 1px solid #d4d4d4;
  border-right: 1px solid #d4d4d4;
  display: flex;
  align-items: center;
  justify-content: space-between;
  padding: 0 8px 0 7px;
}

.st-views {
  width: 68px;
  display: flex;
  align-items: center;
  justify-content: space-between;
  padding: 0 6px 0 8px;
}

/* taskbar */
.taskbar {
  height: 40px;
  background: #1a2b37;
  display: flex;
  align-items: center;
  color: #fff;
  font-family: "Open Sans", sans-serif;
}

.start {
  width: 48px;
  height: 100%;
  display: flex;
  align-items: center;
  justify-content: center;
  flex: none;
}

.task-search {
  width: 343px;
  height: 100%;
  background: #f2f2f2;
  border: 1px solid #bbb;
  border-width: 1px 1px 0;
  display: flex;
  align-items: center;
  gap: 11px;
  padding-left: 12px;
  font-size: 14px;
  color: #222;
  flex: none;
}

.task-icon {
  height: 100%;
  display: flex;
  align-items: center;
  justify-content: center;
  flex: none;
}

.task-icon.mail {
  margin-left: 1px;
}

.task-icon.running {
  border-bottom: 2px solid #76b9ed;
}

.tableau-app {
  width: 40px;
  margin-left: 4px;
  background: #44555f;
  border-bottom: 2px solid #76b9ed;
}

.addr-label {
  width: 48px;
  margin-left: 13px;
  font-size: 11.300px;
  flex: none;
}

.addr-box {
  width: 230px;
  height: 28px;
  background: #fff;
  display: flex;
  align-items: center;
  justify-content: flex-end;
  flex: none;
}

.addr-box b {
  width: 30px;
  height: 100%;
  margin-left: 11px;
  border-left: 1px solid #ddd;
  display: flex;
  align-items: center;
  justify-content: center;
}

.weather {
  width: 62px;
  margin-left: 25px;
  display: flex;
  align-items: center;
  gap: 8px;
  font-size: 14px;
  flex: none;
}

.tray {
  margin-left: 16px;
  display: flex;
  align-items: center;
  gap: 8px;
  flex: none;
}

.tray-chevron {
  margin-right: 5px;
}

.tray-meet {
  margin-right: 2px;
}

.lang {
  width: 23px;
  margin-left: 10px;
  font-size: 11.500px;
  flex: none;
}

.clock {
  width: 76px;
  margin-left: 4px;
  display: flex;
  flex-direction: column;
  align-items: center;
  font-size: 11px;
  line-height: 18px;
  flex: none;
}

.notify {
  margin-left: 9px;
  position: relative;
  flex: none;
}

.notify-count {
  position: absolute;
  left: 7px;
  top: 5px;
  width: 16px;
  height: 16px;
  border-radius: 50%;
  background: #333;
  border: 1px solid #bbb;
  font-size: 11px;
  font-weight: 700;
  line-height: 14px;
  text-align: center;
}

.show-desktop {
  width: 5px;
  height: 100%;
  margin-left: auto;
  border-left: 1px solid #5a6a75;
}
```
